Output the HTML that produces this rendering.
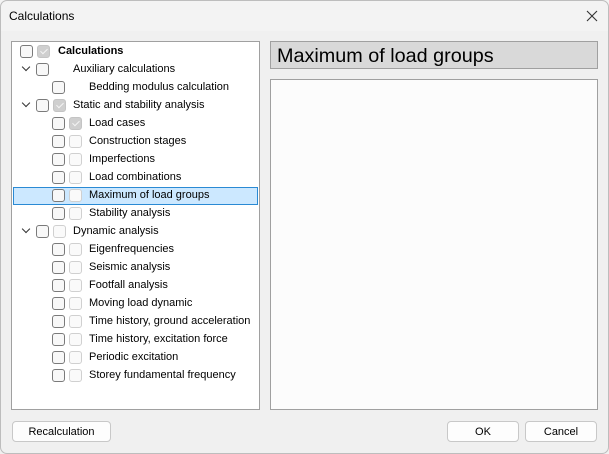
<!DOCTYPE html>
<html><head><style>
*{margin:0;padding:0;box-sizing:border-box}
body{width:609px;height:454px;background:#f0f0f0;font-family:"Liberation Sans",sans-serif;font-size:11px;color:#000;position:relative;overflow:hidden}
.win{position:absolute;left:0;top:0;width:609px;height:454px;background:#f0f0f0;overflow:hidden}
.frame{position:absolute;left:0;top:0;width:609px;height:454px;border:1px solid #bdbdbd;border-radius:7px}
.title{position:absolute;left:0;top:0;width:609px;height:31px;background:#f3f3f3}
.title span{position:absolute;left:9px;top:9px;font-size:12px}
.a{position:absolute}
.tree{left:11px;top:41px;width:249px;height:369px;background:#fff;border:1px solid #a0a0a0}
.cb{position:absolute;width:13px;height:13px;border:1px solid #7a7a7a;border-radius:3px;background:#f8f8f8}
.cg{position:absolute;width:13px;height:13px;border:1px solid #d0d0d0;border-radius:3px;background:#fafafa}
.ck{background:#cfcfcf;border-color:#c4c4c4}
.ck::after{content:"";position:absolute;left:4px;top:1px;width:3px;height:6px;border:solid #f4f4f4;border-width:0 1.3px 1.3px 0;transform:rotate(45deg)}
.t{position:absolute;font-size:11px;white-space:nowrap;margin-top:1px}
.chev{position:absolute;width:6px;height:6px;border:solid #333;border-width:0 1.3px 1.3px 0;transform:rotate(45deg)}
.btn{position:absolute;height:21px;border:1px solid #c8c8c8;border-radius:4px;background:#fdfdfd;text-align:center;line-height:21px;font-size:11px}
</style></head><body><div class="win">
<div class="title"><span>Calculations</span>
<svg class="a" style="left:586px;top:10px" width="12" height="12"><path d="M1 1L11 11M11 1L1 11" stroke="#333" stroke-width="1.1"/></svg></div>
<div class="a tree"></div>
<div class="a" style="left:13px;top:187px;width:245px;height:18px;background:#cce8ff;border:1px solid #2a8ad4"></div>
<div class="a" style="left:270px;top:41px;width:328px;height:28px;background:#d9d9d9;border:1px solid #a0a0a0"></div>
<div class="a" style="left:277px;top:45px;font-size:19.8px">Maximum of load groups</div>
<div class="a" style="left:270px;top:79px;width:328px;height:331px;background:#fcfcfc;border:1px solid #a0a0a0"></div>
<div class="btn" style="left:12px;top:421px;width:99px">Recalculation</div>
<div class="btn" style="left:447px;top:421px;width:72px">OK</div>
<div class="btn" style="left:525px;top:421px;width:72px">Cancel</div>

<div class="cb" style="left:20px;top:45px"></div><div class="cg ck" style="left:37px;top:45px"></div><div class="t" style="left:58px;top:44px;font-weight:bold">Calculations</div>
<div class="chev" style="left:23px;top:64px"></div><div class="cb" style="left:36px;top:63px"></div><div class="t" style="left:73px;top:62px">Auxiliary calculations</div>
<div class="cb" style="left:52px;top:81px"></div><div class="t" style="left:89px;top:80px">Bedding modulus calculation</div>
<div class="chev" style="left:23px;top:100px"></div><div class="cb" style="left:36px;top:99px"></div><div class="cg ck" style="left:53px;top:99px"></div><div class="t" style="left:73px;top:98px">Static and stability analysis</div>
<div class="cb" style="left:52px;top:117px"></div><div class="cg ck" style="left:69px;top:117px"></div><div class="t" style="left:89px;top:116px">Load cases</div>
<div class="cb" style="left:52px;top:135px"></div><div class="cg" style="left:69px;top:135px"></div><div class="t" style="left:89px;top:134px">Construction stages</div>
<div class="cb" style="left:52px;top:153px"></div><div class="cg" style="left:69px;top:153px"></div><div class="t" style="left:89px;top:152px">Imperfections</div>
<div class="cb" style="left:52px;top:171px"></div><div class="cg" style="left:69px;top:171px"></div><div class="t" style="left:89px;top:170px">Load combinations</div>
<div class="cb" style="left:52px;top:189px"></div><div class="cg" style="left:69px;top:189px"></div><div class="t" style="left:89px;top:188px">Maximum of load groups</div>
<div class="cb" style="left:52px;top:207px"></div><div class="cg" style="left:69px;top:207px"></div><div class="t" style="left:89px;top:206px">Stability analysis</div>
<div class="chev" style="left:23px;top:226px"></div><div class="cb" style="left:36px;top:225px"></div><div class="cg" style="left:53px;top:225px"></div><div class="t" style="left:73px;top:224px">Dynamic analysis</div>
<div class="cb" style="left:52px;top:243px"></div><div class="cg" style="left:69px;top:243px"></div><div class="t" style="left:89px;top:242px">Eigenfrequencies</div>
<div class="cb" style="left:52px;top:261px"></div><div class="cg" style="left:69px;top:261px"></div><div class="t" style="left:89px;top:260px">Seismic analysis</div>
<div class="cb" style="left:52px;top:279px"></div><div class="cg" style="left:69px;top:279px"></div><div class="t" style="left:89px;top:278px">Footfall analysis</div>
<div class="cb" style="left:52px;top:297px"></div><div class="cg" style="left:69px;top:297px"></div><div class="t" style="left:89px;top:296px">Moving load dynamic</div>
<div class="cb" style="left:52px;top:315px"></div><div class="cg" style="left:69px;top:315px"></div><div class="t" style="left:89px;top:314px">Time history, ground acceleration</div>
<div class="cb" style="left:52px;top:333px"></div><div class="cg" style="left:69px;top:333px"></div><div class="t" style="left:89px;top:332px">Time history, excitation force</div>
<div class="cb" style="left:52px;top:351px"></div><div class="cg" style="left:69px;top:351px"></div><div class="t" style="left:89px;top:350px">Periodic excitation</div>
<div class="cb" style="left:52px;top:369px"></div><div class="cg" style="left:69px;top:369px"></div><div class="t" style="left:89px;top:368px">Storey fundamental frequency</div>
<div class="frame"></div>
</div></body></html>
